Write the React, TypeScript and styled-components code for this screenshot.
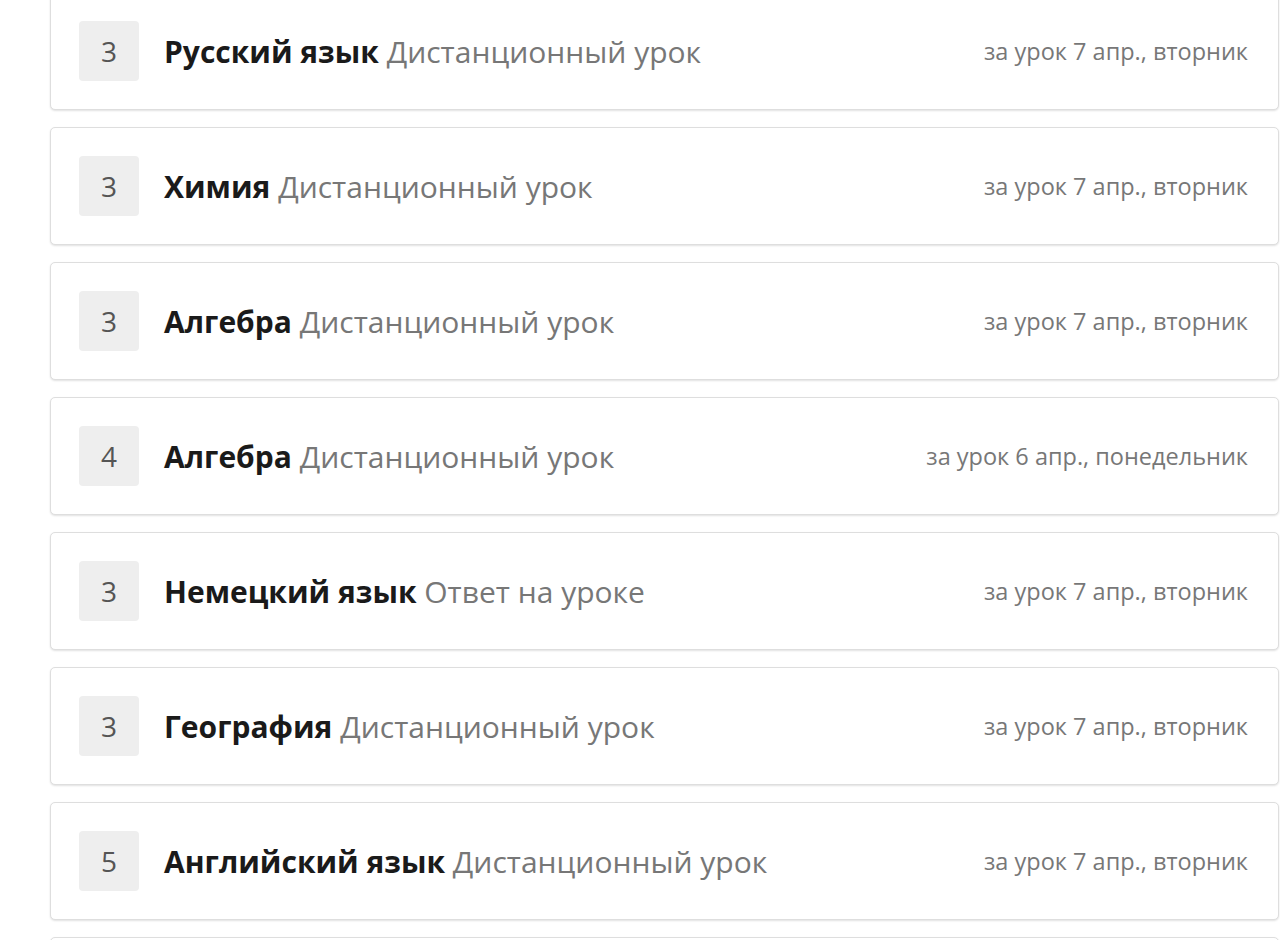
import styled, { createGlobalStyle } from "styled-components";

interface Mark {
  value: number;
  subject: string;
  kind: string;
  date: string;
}

const marks: Mark[] = [
  { value: 3, subject: "Русский язык", kind: "Дистанционный урок", date: "за урок 7 апр., вторник" },
  { value: 3, subject: "Химия", kind: "Дистанционный урок", date: "за урок 7 апр., вторник" },
  { value: 3, subject: "Алгебра", kind: "Дистанционный урок", date: "за урок 7 апр., вторник" },
  { value: 4, subject: "Алгебра", kind: "Дистанционный урок", date: "за урок 6 апр., понедельник" },
  { value: 3, subject: "Немецкий язык", kind: "Ответ на уроке", date: "за урок 7 апр., вторник" },
  { value: 3, subject: "География", kind: "Дистанционный урок", date: "за урок 7 апр., вторник" },
  { value: 5, subject: "Английский язык", kind: "Дистанционный урок", date: "за урок 7 апр., вторник" },
];

const colors = {
  border: "#dedede",
  badge: "#eeeeee",
  badgeText: "#555555",
  title: "#1a1a1a",
  muted: "#777777",
};

const GlobalStyle = createGlobalStyle`
  html, body {
    margin: 0;
    background: #ffffff;
    font-family: "Open Sans", "Noto Sans", sans-serif;
    overflow: hidden;
  }
`;

const Page = styled.div`
  height: 940px;
  overflow: hidden;
  padding: 0 1px 0 50px;
`;

const List = styled.div`
  display: flex;
  flex-direction: column;
  gap: 17px;
  margin-top: -8px;
`;

const Card = styled.div`
  height: 116px;
  flex-shrink: 0;
  display: flex;
  align-items: center;
  padding: 0 30px 0 28px;
  background: #ffffff;
  border: 1px solid ${colors.border};
  border-radius: 5px;
  box-shadow: 0 1px 2px rgba(0, 0, 0, 0.12);
`;

const Badge = styled.div`
  width: 60px;
  height: 60px;
  flex-shrink: 0;
  display: flex;
  align-items: center;
  justify-content: center;
  background: ${colors.badge};
  border-radius: 4px;
  font-size: 28px;
  color: ${colors.badgeText};
`;

const Title = styled.div`
  flex: 1;
  margin-left: 25px;
  font-size: 30px;
  white-space: nowrap;
`;

const Subject = styled.span`
  font-weight: 700;
  color: ${colors.title};
`;

const Kind = styled.span`
  color: ${colors.muted};
`;

const DateText = styled.div`
  font-size: 23.5px;
  color: ${colors.muted};
  white-space: nowrap;
`;

export default function App() {
  return (
    <>
      <GlobalStyle />
      <Page>
        <List>
          {marks.map((m, i) => (
            <Card key={i}>
              <Badge>{m.value}</Badge>
              <Title>
                <Subject>{m.subject}</Subject> <Kind>{m.kind}</Kind>
              </Title>
              <DateText>{m.date}</DateText>
            </Card>
          ))}
          <Card />
        </List>
      </Page>
    </>
  );
}
